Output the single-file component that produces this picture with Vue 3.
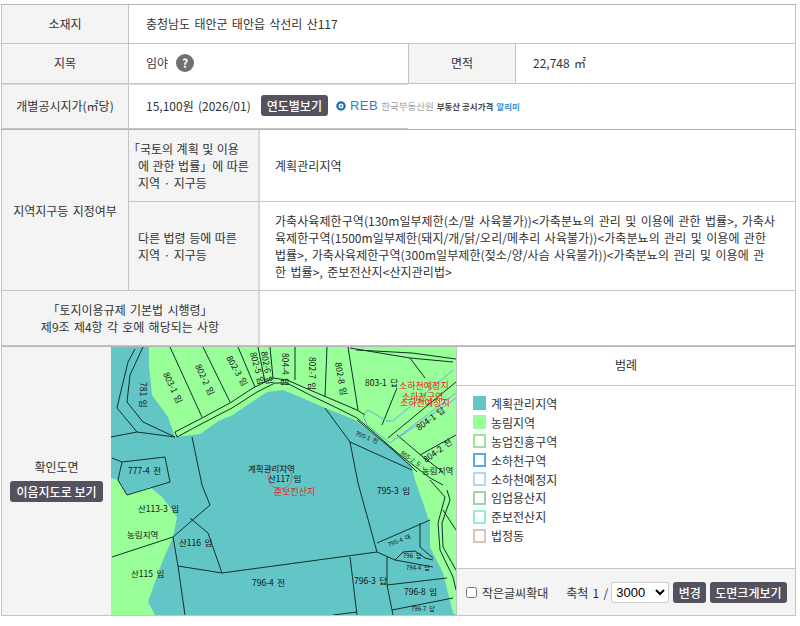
<template>
  <div class="page">
    <section class="basic">
      <div class="th first">소재지</div>
      <div class="td first addr">충청남도 태안군 태안읍 삭선리 산117</div>
      <div class="th">지목</div>
      <div class="td jimok">임야 <span class="help">?</span></div>
      <div class="th area-th">면적</div>
      <div class="td area-td">22,748 ㎡</div>
      <div class="th last">개별공시지가(㎡당)</div>
      <div class="td last price">
        <span>15,100원 (2026/01)</span>
        <button class="btn year-btn">연도별보기</button>
        <span class="reb">
          <svg width="10" height="10" viewBox="0 0 11 11">
            <circle cx="5.5" cy="5.5" r="4" fill="none" stroke="#1a6fa8" stroke-width="2.5" />
            <circle cx="5.5" cy="5.5" r="1.5" fill="#4fb0d8" />
          </svg>
          <b class="reb-mark">REB</b>
          <span class="reb-name">한국부동산원</span>
          <b class="reb-title">부동산 공시가격</b>
          <b class="reb-blue">알리미</b>
        </span>
      </div>
    </section>

    <section class="zone">
      <div class="th zone-title">지역지구등 지정여부</div>
      <div class="th zone-sub sub1"><div><span class="open">「국토의 계획 및 이용</span><br><span class="ind">에 관한 법률」에 따른</span><br><span class="ind">지역 · 지구등</span></div></div>
      <div class="td zone-val val1">계획관리지역</div>
      <div class="th zone-sub sub2"><div><span class="ind">다른 법령 등에 따른</span><br><span class="ind">지역 · 지구등</span></div></div>
      <div class="td zone-val val2"><div>가축사육제한구역(130m일부제한(소/말 사육불가))&lt;가축분뇨의 관리 및 이용에 관한 법률&gt;, 가축사육제한구역(1500m일부제한(돼지/개/닭/오리/메추리 사육불가))&lt;가축분뇨의 관리 및 이용에 관한 법률&gt;, 가축사육제한구역(300m일부제한(젖소/양/사슴 사육불가))&lt;가축분뇨의 관리 및 이용에 관<br>한 법률&gt;, 준보전산지&lt;산지관리법&gt;</div></div>
      <div class="th reg-th"><div>「토지이용규제 기본법 시행령」<br>제9조 제4항 각 호에 해당되는 사항</div></div>
      <div class="td reg-td"></div>
    </section>

    <section class="mapbox">
      <div class="th map-label">
        <div>확인도면</div>
        <button class="btn ium-btn">이음지도로 보기</button>
      </div>
      <svg class="map" viewBox="111 347 345 268" width="345" height="268">
        <rect x="111" y="347" width="345" height="268" fill="#62c6c6" />
        <path class="green" d="M149 347 L149 365 L152 395 L168 417 L175 437 L200 434 L220 420 L231 416 L243 408 L255 400 L267 392 L283 390 L300 397 L323 407 L355 420 L397 452 L412 467 L415 480 L430 523 L430 547 L443 573 L453 613 L456 615 L456 347 Z" />
        <path class="green" d="M111 478 L118 480 L127 495 L150 487 L163 498 L177 517 L173 537 L163 560 L148 602 L155 615 L111 615 Z" />
        <g class="lines">
          <!-- road through the green area -->
          <path d="M175 432 L202 418 L230 403 L253 388 L273 378 L287 380 L310 390 L357 410 L365 415" />
          <path d="M177 437 L203 423 L232 408 L257 392 L275 383 L287 383 L310 395 L337 408 L357 418 L377 435 L400 455 L430 478 L443 485" />
          <path d="M357 420 L387 445 L412 467 L417 472" />
          <path d="M175 432 L177 437" />
          <!-- parcels north of the road -->
          <path d="M170 347 L202 417 M203 347 L230 402 M238 347 L255 387 M258 347 L265 382 M270 347 L273 378 M295 347 L295 380 M327 347 L325 397 M348 347 L358 410" />
          <path d="M350 348 L410 358 L453 362 M356 350 L412 353 L456 359 M410 358 L425 378 M382 425 L397 388" />
          <path d="M388 438 L456 382" />
          <path d="M397 435 L423 457 L443 472 M420 455 L456 435" />
          <!-- west side -->
          <path d="M135 349 L128 362 L120 395 L117 408 L137 432 M143 347 L130 375 L127 402 L143 422 L175 437" />
          <path d="M111 437 L137 432 L175 437 M192 437 L202 485 L210 505 L173 537" />
          <path d="M122 462 L165 457 L170 482 L127 495 L118 480 L122 462 M112 458 L122 462" />
          <path d="M190 518 L208 533 L222 573 M112 557 L173 537 L178 566 L185 615 M178 566 L222 573" />
          <!-- south and east parcels -->
          <path d="M325 408 L350 442 L412 470 M350 442 L358 483 L377 552 L222 573" />
          <path d="M377 543 L430 520 M377 552 L395 560 L433 567 M395 560 L403 552 L415 551 L425 558 L433 560 M420 523 L420 547 L433 558" />
          <path d="M350 557 L357 615 M387 557 L387 585 L393 615 M387 585 L447 578 M392 610 L453 598 M333 615 L357 612" />
          <path d="M430 480 L445 497 L438 523 L440 550 L453 577 L456 590 M447 490 L450 500 L442 523 L443 547 L456 570 M443 510 L456 530" />
        </g>
        <path class="blue" d="M363 415 L368 410 L387 421 L393 421 L453 370 M363 415 L367 425 L390 443 L398 437 L456 393 M398 438 L456 398" />
        <circle cx="280" cy="477" r="12" class="circle" />
        <g class="lbl">
          <text transform="translate(163 374) rotate(65)">803-1 임</text>
          <text transform="translate(195 366) rotate(65)">802-2 임</text>
          <text transform="translate(226 358) rotate(60)">802-3 임</text>
          <text transform="translate(250 353) rotate(75)">802-5 임</text>
          <text transform="translate(261 352) rotate(80)">802-6 임</text>
          <text transform="translate(282 353) rotate(90)">804-4 임</text>
          <text transform="translate(309 357) rotate(90)">802-7 임</text>
          <text transform="translate(335 363) rotate(80)">802-8 임</text>
          <text transform="translate(140 382) rotate(90)">781 임</text>
          <text x="365" y="386">803-1 답</text>
          <text transform="translate(419 431) rotate(-36)">804-1 답</text>
          <text transform="translate(426 463) rotate(-36)">804-2 전</text>
          <text x="128" y="474">777-4 전</text>
          <text x="248" y="472">계획관리지역</text>
          <text x="268" y="482">산117 임</text>
          <text x="377" y="494">795-3 임</text>
          <text x="422" y="474">농림지역</text>
          <text x="138" y="512">산113-3 임</text>
          <text x="127" y="538">농림지역</text>
          <text x="179" y="546">산116 임</text>
          <text x="131" y="577">산115 임</text>
          <text x="252" y="586">796-4 전</text>
          <text x="354" y="584">796-3 답</text>
          <text x="404" y="595">796-8 임</text>
        </g>
        <g class="lbl small">
          <text transform="translate(355 435) rotate(22)">795-1 전</text>
          <text transform="translate(400 454) rotate(35)">805-2 도</text>
          <text transform="translate(389 547) rotate(-22)">795-4 대</text>
          <text x="403" y="558">796 답</text>
          <text x="406" y="570">794-4 답</text>
          <text x="411" y="611">796-7 답</text>
        </g>
        <g class="red">
          <text x="399" y="389">소하천예정지</text>
          <text x="402" y="400">소하천구역</text>
          <text x="400" y="406">소하천예정지</text>
          <text x="274" y="495">준보전산지</text>
        </g>
      </svg>
      <div class="legend">
        <div class="legend-head">범례</div>
        <ul class="legend-list">
          <li v-for="item in legend" :key="item.name">
            <span class="swatch" :style="{ borderColor: item.color, background: item.solid ? item.color : '#fff' }"></span>
            {{ item.name }}
          </li>
        </ul>
        <div class="legend-foot">
          <label class="zoom-check"><input type="checkbox"> 작은글씨확대</label>
          <span class="scale">축척 1 /</span>
          <select class="scale-select">
            <option>3000</option>
          </select>
          <button class="btn change-btn">변경</button>
          <button class="btn big-btn">도면크게보기</button>
        </div>
      </div>
    </section>
  </div>
</template>

<script setup>
const legend = [
  { name: '계획관리지역', color: '#62c6c6', solid: true },
  { name: '농림지역', color: '#99ff99', solid: true },
  { name: '농업진흥구역', color: '#99e699' },
  { name: '소하천구역', color: '#55aaee' },
  { name: '소하천예정지', color: '#b5d5f5' },
  { name: '임업용산지', color: '#99d6b0' },
  { name: '준보전산지', color: '#99eecc' },
  { name: '법정동', color: '#d6c8b5' },
];
</script>

<style>
body {
  background: #fff;
}
</style>

<style scoped>
.page {
  width: 796px;
  height: 626px;
  padding: 4px 0 0 1px;
  box-sizing: border-box;
  font-family: "Noto Sans CJK KR", "Noto Sans", sans-serif;
  font-size: 12px;
  word-spacing: 1.6px;
  color: #333;
}

.th {
  background: #f4f4f4;
  display: flex;
  align-items: center;
  justify-content: center;
  text-align: center;
  box-sizing: border-box;
  border-left: 1px solid #c4c4c4;
}

.td {
  display: flex;
  align-items: center;
  padding-left: 17px;
  box-sizing: border-box;
  border-left: 1px solid #c4c4c4;
}

.basic {
  display: grid;
  grid-template-columns: 127px 280px 107px 280px;
  grid-template-rows: 39px 40px 45px;
  border-top: 1px solid #b5b5b5;
  border-right: 1px solid #c4c4c4;
}

.basic > div {
  border-bottom: 1px solid #c4c4c4;
  padding-bottom: 2px;
}

.addr {
  grid-column: 2 / 5;
}

.basic .last {
  border-top: 1px solid #ddd;
  border-bottom-color: #c4c4c4;
}

.jimok {
  gap: 8px;
}

.help {
  width: 18px;
  height: 18px;
  border-radius: 50%;
  background: #707070;
  color: #fff;
  font-weight: 700;
  display: flex;
  align-items: center;
  justify-content: center;
}

.price {
  gap: 10px;
  white-space: nowrap;
}

.btn {
  background: #54525e;
  color: #fff;
  border: 0;
  border-radius: 3px;
  font-family: inherit;
  font-size: 12px;
  font-weight: 500;
  height: 21px;
  padding: 0 6px;
  display: inline-flex;
  align-items: center;
  white-space: nowrap;
}

.reb {
  display: inline-flex;
  align-items: center;
  gap: 3px;
  font-size: 9.5px;
  margin-left: -2px;
  white-space: nowrap;
  word-spacing: 0;
}

.reb-mark {
  color: #2f7fc4;
  font-family: "Liberation Sans", sans-serif;
  font-size: 13px;
  font-weight: 400;
  letter-spacing: 0.5px;
  margin-left: 1px;
}

.reb-name {
  color: #a0a0a0;
}

.reb-title {
  color: #444;
  font-size: 8.5px;
}

.reb-blue {
  color: #3d8fd8;
  font-size: 8.5px;
}

.zone {
  display: grid;
  grid-template-columns: 127px 130px 537px;
  grid-template-rows: 72px 89px 55px;
  border-top: 1px solid #b5b5b5;
  border-right: 1px solid #c4c4c4;
  line-height: 17px;
}

.zone > div {
  border-bottom: 1px solid #c4c4c4;
}

.zone-title {
  grid-row: 1 / 3;
}

.zone-sub {
  justify-content: flex-start;
  text-align: left;
  padding-left: 2px;
  word-spacing: 0.8px;
}

.zone-val {
  padding-left: 15px;
  padding-right: 14px;
  border-left-width: 2px;
  border-left-color: #d8d8d8;
  word-break: break-all;
  letter-spacing: 0.07px;
}

.open {
  margin-left: -3px;
}

.ind {
  padding-left: 7px;
}

.reg-th {
  grid-column: 1 / 3;
}

.reg-td {
  border-left-width: 2px;
  border-left-color: #d8d8d8;
}

.mapbox {
  display: grid;
  grid-template-columns: 110px 345px 339px;
  height: 268px;
  border-top: 1px solid #b5b5b5;
  border-right: 1px solid #c4c4c4;
  border-bottom: 1px solid #c4c4c4;
}

.map-label {
  flex-direction: column;
  gap: 6px;
  padding-bottom: 2px;
}

.ium-btn {
  padding: 0 7px;
}

.map {
  display: block;
}

.green {
  fill: #99ff99;
}

.lines {
  fill: none;
  stroke: #12302a;
  stroke-width: 1;
}

.blue {
  fill: none;
  stroke: #6fa8e8;
  stroke-width: 1;
}

.circle {
  fill: none;
  stroke: #e05050;
  stroke-width: 0.8;
}

.lbl text {
  font-size: 8.5px;
  fill: #111;
}

.lbl.small text {
  font-size: 6px;
}

.red text {
  font-size: 9px;
  fill: #f01818;
}

.legend {
  display: flex;
  flex-direction: column;
  border-left: 1px solid #c4c4c4;
}

.legend-head {
  height: 39px;
  box-sizing: border-box;
  display: flex;
  align-items: center;
  justify-content: center;
  padding-bottom: 3px;
  border-bottom: 1px solid #c4c4c4;
}

.legend-list {
  list-style: none;
  margin: 0;
  padding: 8px 0 0 16px;
  flex: 1;
}

.legend-list li {
  height: 18.9px;
  display: flex;
  align-items: center;
  gap: 5px;
}

.swatch {
  width: 13px;
  height: 14px;
  box-sizing: border-box;
  border: 2px solid;
}

.legend-foot {
  height: 47px;
  background: #f4f4f4;
  border-top: 1px solid #c4c4c4;
  display: flex;
  align-items: center;
  padding-left: 9px;
  box-sizing: border-box;
}

.zoom-check {
  display: flex;
  align-items: center;
  gap: 5px;
  margin-right: 18px;
}

.zoom-check input {
  width: 11px;
  height: 11px;
  margin: 0;
}

.scale {
  margin-right: 3px;
}

.scale-select {
  width: 58px;
  height: 21px;
  font-size: 13px;
  font-family: "Liberation Sans", sans-serif;
  margin-right: 4px;
  background: #fff;
  border: 1px solid #ccc;
  border-radius: 2px;
}

.change-btn {
  width: 33px;
  padding: 0;
  justify-content: center;
}

.legend-foot .btn + .btn {
  margin-left: 4px;
}

.big-btn {
  padding: 0 5px;
}
</style>
